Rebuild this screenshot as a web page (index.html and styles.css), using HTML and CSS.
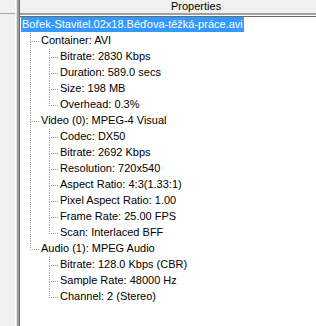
FILE: index.html
```html
<!DOCTYPE html>
<html lang="cs">
<head>
    <meta charset="UTF-8"/>
    <title>Properties</title>
    <link rel="stylesheet" href="styles.css">
</head>
<body>
<div class="window">
    <div class="sidebar">
        <div class="sidebar-head"></div>
    </div>
    <div class="splitter"></div>
    <div class="panel">
        <div class="panel-head">Properties</div>
        <div class="tree">
            <div class="row"><span class="label selected">Bořek-Stavitel.02x18.Béďova-těžká-práce.avi</span></div>
            <ul class="branch">
                <li class="node">
                    <div class="row"><span class="label">Container: AVI</span></div>
                    <ul class="branch">
                        <li class="node"><div class="row"><span class="label">Bitrate: 2830 Kbps</span></div></li>
                        <li class="node"><div class="row"><span class="label">Duration: 589.0 secs</span></div></li>
                        <li class="node"><div class="row"><span class="label">Size: 198 MB</span></div></li>
                        <li class="node"><div class="row"><span class="label">Overhead: 0.3%</span></div></li>
                    </ul>
                </li>
                <li class="node">
                    <div class="row"><span class="label">Video (0): MPEG-4 Visual</span></div>
                    <ul class="branch">
                        <li class="node"><div class="row"><span class="label">Codec: DX50</span></div></li>
                        <li class="node"><div class="row"><span class="label">Bitrate: 2692 Kbps</span></div></li>
                        <li class="node"><div class="row"><span class="label">Resolution: 720x540</span></div></li>
                        <li class="node"><div class="row"><span class="label">Aspect Ratio: 4:3(1.33:1)</span></div></li>
                        <li class="node"><div class="row"><span class="label">Pixel Aspect Ratio: 1.00</span></div></li>
                        <li class="node"><div class="row"><span class="label">Frame Rate: 25.00 FPS</span></div></li>
                        <li class="node"><div class="row"><span class="label">Scan: Interlaced BFF</span></div></li>
                    </ul>
                </li>
                <li class="node">
                    <div class="row"><span class="label">Audio (1): MPEG Audio</span></div>
                    <ul class="branch">
                        <li class="node"><div class="row"><span class="label">Bitrate: 128.0 Kbps (CBR)</span></div></li>
                        <li class="node"><div class="row"><span class="label">Sample Rate: 48000 Hz</span></div></li>
                        <li class="node"><div class="row"><span class="label">Channel: 2 (Stereo)</span></div></li>
                    </ul>
                </li>
            </ul>
        </div>
    </div>
</div>
</body>
</html>
```

FILE: styles.css
```css
html, body {
    margin: 0;
    padding: 0;
    background-color: #fff;
}

body {
    font-family: "Liberation Sans", Arial, sans-serif;
    font-size: 11px;
    color: #000;
}

.window {
    display: flex;
    width: 316px;
    height: 326px;
    overflow: hidden;
}

.sidebar {
    width: 15px;
    flex: none;
    background-color: #f0f0f0;
}

.sidebar-head {
    height: 13px;
    border-bottom: 1px solid #a8a8a8;
}

/* sunken edge between the two panes */
.splitter {
    width: 5px;
    flex: none;
    background: linear-gradient(to right,
        #ffffff 0 1px,
        #e3e3e3 1px 2px,
        #a0a0a0 2px 4px,
        #696969 4px 5px);
}

.panel {
    flex: 1;
    min-width: 0;
    background-color: #fff;
}

.panel-head {
    height: 13px;
    line-height: 13px;
    padding-left: 151px;
    background-color: #f0f0f0;
    border-bottom: 2px solid #a0a0a0;
    white-space: nowrap;
}

.tree {
    margin-top: 1px;
    border-top: 1px solid #696969;
}

.row {
    height: 16px;
    white-space: nowrap;
}

.label {
    display: inline-block;
    height: 15px;
    line-height: 15px;
    padding: 0 1px;
}

.tree > .row .label {
    margin-left: 1px;
}

.label.selected {
    background-color: #3399ff;
    color: #fff;
}

.branch {
    list-style: none;
    margin: 0 0 0 10px;
    padding: 0;
}

.node .branch {
    margin-left: 9px;
}

.node {
    position: relative;
    padding-left: 10px;
}

.node::before {
    content: "";
    position: absolute;
    left: 0;
    top: 0;
    width: 8px;
    height: 8px;
    border-left: 1px dotted #a0a0a0;
    border-bottom: 1px dotted #a0a0a0;
}

.node:not(:last-child)::after {
    content: "";
    position: absolute;
    left: 0;
    top: 9px;
    bottom: 0;
    border-left: 1px dotted #a0a0a0;
}
```
